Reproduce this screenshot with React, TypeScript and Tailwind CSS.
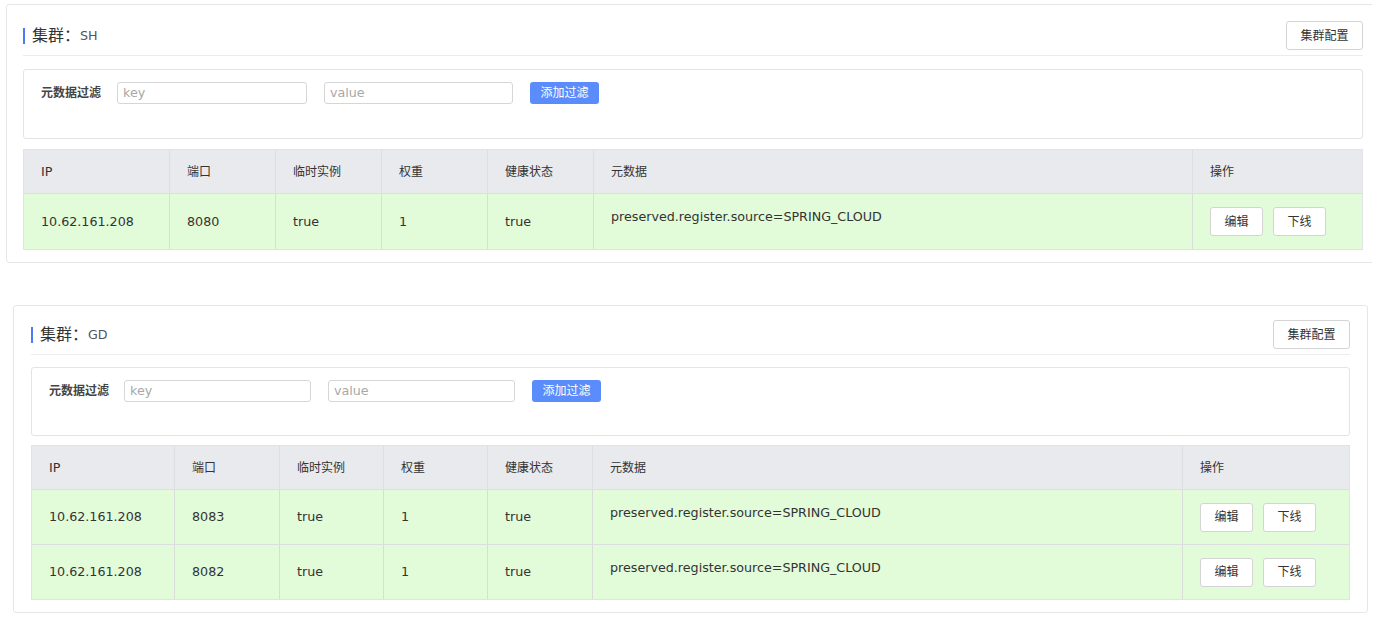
import React from "react";

type Row = { ip: string; port: string };

type PanelProps = {
  name: string;
  rows: Row[];
  gridCols: string;
  keyW: string;
  valW: string;
  labelMr: string;
  pt: string;
  px: string;
  filterMt: string;
  filterH: string;
  tableMt: string;
  rowH: string;
};

const font = { fontFamily: '"DejaVu Sans", "Noto Sans CJK SC", sans-serif' };

function Panel(p: PanelProps) {
  return (
    <div className={`border border-[#e6e6e6] rounded-[3px] bg-white pb-[12px] ${p.px} ${p.pt}`}>
      <div className="flex items-center justify-between pb-[5px] border-b border-[#ececec]">
        <div className="flex items-center">
          <div className="w-[2px] h-[16px] bg-[#4a7cf6] mr-[7px]" />
          <span className="text-[16px] text-[#333]">集群：</span>
          <span className="text-[12.7px] text-[#555]">{p.name}</span>
        </div>
        <button className="w-[77px] h-[29px] border border-[#d4d4d4] rounded-[3px] bg-white text-[12px] text-[#333]">
          集群配置
        </button>
      </div>
      <div className={`border border-[#e4e4e4] rounded-[3px] pl-[17px] pt-[12px] flex items-start ${p.filterMt} ${p.filterH}`}>
        <div className={`h-[22px] flex items-center text-[12px] font-bold text-[#444] ${p.labelMr}`}>元数据过滤</div>
        <div className={`h-[22px] border border-[#d6d6d6] rounded-[3px] flex items-center pl-[5px] text-[12.7px] text-[#a8a8a8] ${p.keyW}`}>
          key
        </div>
        <div className={`ml-[17px] h-[22px] border border-[#d6d6d6] rounded-[3px] flex items-center pl-[5px] text-[12.7px] text-[#a8a8a8] ${p.valW}`}>
          value
        </div>
        <button className="ml-[17px] w-[69px] h-[22px] rounded-[3px] bg-[#5b8cfb] text-white text-[12px] flex items-center justify-center">
          添加过滤
        </button>
      </div>
      <div className={`border border-[#e1e3e8] ${p.tableMt}`}>
        <div className={`grid ${p.gridCols} bg-[#e9eaee] h-[43px] text-[12px] text-[#333]`}>
          {["IP", "端口", "临时实例", "权重", "健康状态", "元数据", "操作"].map((h, i) => (
            <div
              key={h}
              className={`flex items-center pl-[17px] ${i < 6 ? "border-r border-[#dcdee3]" : ""} ${i === 0 ? "text-[12.7px]" : ""}`}
            >
              {h}
            </div>
          ))}
        </div>
        {p.rows.map((r, ri) => (
          <div key={ri} className={`grid ${p.gridCols} bg-[#e2fbd9] border-t border-[#dcdee3] text-[12.7px] text-[#333] ${p.rowH}`}>
            <div className="flex items-center pl-[17px] border-r border-[#d8ddd8]">{r.ip}</div>
            <div className="flex items-center pl-[17px] border-r border-[#d8ddd8]">{r.port}</div>
            <div className="flex items-center pl-[17px] border-r border-[#d8ddd8]">true</div>
            <div className="flex items-center pl-[17px] border-r border-[#d8ddd8]">1</div>
            <div className="flex items-center pl-[17px] border-r border-[#d8ddd8]">true</div>
            <div className="flex items-start pl-[17px] pt-[13px] border-r border-[#d8ddd8]">
              preserved.register.source=SPRING_CLOUD
            </div>
            <div className="flex items-center pl-[17px] gap-[10px]">
              <button className="w-[53px] h-[29px] border border-[#d4d4d4] rounded-[3px] bg-white text-[12px] text-[#333]">
                编辑
              </button>
              <button className="w-[53px] h-[29px] border border-[#d4d4d4] rounded-[3px] bg-white text-[12px] text-[#333]">
                下线
              </button>
            </div>
          </div>
        ))}
      </div>
    </div>
  );
}

export default function App() {
  return (
    <div className="w-[1381px] h-[625px] bg-white overflow-hidden pt-[4px]" style={font}>
      <div className="ml-[6px] w-[1366px] overflow-hidden">
        <div className="w-[1374px]">
          <Panel
            name="SH"
            rows={[{ ip: "10.62.161.208", port: "8080" }]}
            gridCols="grid-cols-[146px_106px_106px_106px_106px_599px_168px]"
            keyW="w-[190px]"
            valW="w-[189px]"
            labelMr="mr-[16px]"
            pt="pt-[16px]"
            px="px-[16px]"
            filterMt="mt-[13px]"
            filterH="h-[70px]"
            tableMt="mt-[10px]"
            rowH="h-[56px]"
          />
        </div>
      </div>
      <div className="ml-[13px] mt-[42px] w-[1355px]">
        <Panel
          name="GD"
          rows={[
            { ip: "10.62.161.208", port: "8083" },
            { ip: "10.62.161.208", port: "8082" },
          ]}
          gridCols="grid-cols-[143px_105px_104px_104px_105px_590px_166px]"
          keyW="w-[187px]"
          valW="w-[187px]"
          labelMr="mr-[15px]"
          pt="pt-[14px]"
          px="px-[17px]"
          filterMt="mt-[12px]"
          filterH="h-[69px]"
          tableMt="mt-[9px]"
          rowH="h-[55px]"
        />
      </div>
    </div>
  );
}
